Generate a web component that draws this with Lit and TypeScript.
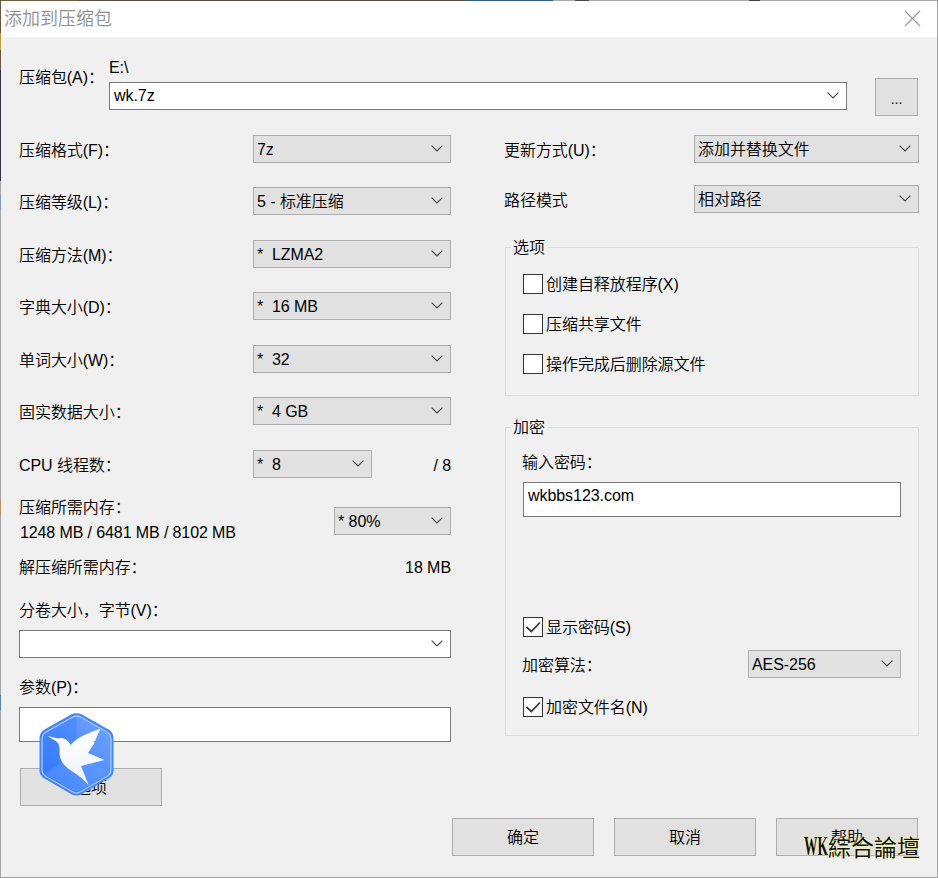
import { LitElement, html, css, svg } from "lit";
import { customElement, property } from "lit/decorators.js";

@customElement("ui-combo")
class UiCombo extends LitElement {
  @property() value = "";
  @property({ type: Boolean, reflect: true }) editable = false;
  static styles = css`
    :host { display: flex; box-sizing: border-box; height: 28px; border: 1px solid #adadad; background: #e1e1e1; align-items: center; justify-content: space-between; padding: 0 7px 0 3px; flex: none; }
    :host([editable]) { background: #fff; border-color: #7a7a7a; padding-left: 4px; }
    .value { white-space: pre; line-height: 20px; padding-top: 2px; }
    :host([editable]) .value { padding-top: 0; }
    .arrow { width: 12px; height: 7px; fill: none; stroke: #444; stroke-width: 1.15; margin-bottom: 1px; }
  `;
  render() {
    return html`<span class="value">${this.value}</span>
      <svg class="arrow" viewBox="0 0 12 7"><path d="M.6.7 6 6 11.4.7" /></svg>`;
  }
}

@customElement("ui-check")
class UiCheck extends LitElement {
  @property() label = "";
  @property({ type: Boolean }) checked = false;
  static styles = css`
    :host { display: flex; height: 20px; align-items: center; gap: 3px; }
    .box { box-sizing: border-box; width: 20px; height: 20px; border: 1px solid #333; background: #fff; flex: none; }
    .mark { display: block; width: 18px; height: 18px; fill: none; stroke: #333; stroke-width: 1.7; }
    .label { line-height: 20px; white-space: nowrap; padding-top: 2px; }
  `;
  render() {
    return html`<span class="box">${this.checked ? html`<svg class="mark" viewBox="0 0 18 18"><path d="M2.5 8.8 7.3 13.5 16 4.5" /></svg>` : ""}</span>
      <span class="label">${this.label}</span>`;
  }
}

const settings = [
  ["压缩格式(F)：", "7z"],
  ["压缩等级(L)：", "5 - 标准压缩"],
  ["压缩方法(M)：", "*  LZMA2"],
  ["字典大小(D)：", "*  16 MB"],
  ["单词大小(W)：", "*  32"],
  ["固实数据大小：", "*  4 GB"],
];

const bird = svg`
  <defs>
    <linearGradient id="g" x1="0" y1="1" x2="1" y2="0">
      <stop offset="0" stop-color="#3078ff" /><stop offset="1" stop-color="#72a4ff" />
    </linearGradient>
    <linearGradient id="b" x1="0" y1="0" x2="0" y2="1">
      <stop offset="0" stop-color="#fff" /><stop offset="1" stop-color="#edf3ff" />
    </linearGradient>
  </defs>
  <path d="M32 1.500Q37.500 -1.200 43 1.500L69.500 16.500Q74.500 19.500 74.500 25V57.500Q74.500 62.500 69.500 65.500L43 81Q37.500 84 32 81L5.500 65.500Q.5 62.500 .5 57.500V25Q.5 19.500 5.500 16.500Z" fill="#4587f5" />
  <path d="M33.500 4Q37.500 2 41.500 4L68 19Q72 21.500 72 26V57Q72 61 68 63.500L41.500 78.700Q37.500 81 33.500 78.700L7 63.500Q3 61 3 57V26Q3 21.500 7 19Z" fill="url(#g)" stroke="#a4c5ff" stroke-width="1.300" />
  <path d="M37.500 4V41L5 59V26Q5 22 8 20.500L34 5.500Z" fill="#2467e8" opacity=".2" />
  <path d="M37.500 41 70 59 42 77Q37.500 79 33 77L6 61Z" fill="#6fa4ff" opacity=".28" />
  <path d="M8.500 23 19 25.500Q27 23.500 31.500 32C39 23.500 50 20 61.500 15.500L56 28 54.500 28 55.500 30 49 40 65.500 47 42 53 50 73C41 59 21 57 20.500 40Q21.500 29.500 15 27Z" fill="url(#b)" />`;

@customElement("app-root")
class AppRoot extends LitElement {
  static styles = css`
    :host { display: block; width: 938px; height: 878px; overflow: hidden; color: #000; font: 350 16px/20px "Liberation Sans", "Noto Sans CJK SC", sans-serif; letter-spacing: -.06px; }
    .window { position: relative; box-sizing: border-box; height: 878px; border: 1px solid #a3a3a3; background: #f0f0f0; display: flex; flex-direction: column; }
    .edge-top { position: absolute; left: -1px; top: -1px; width: 938px; height: 1px; background: linear-gradient(90deg, #715a40 78px, #5b4a41 78px 468px, #2f5f8a 468px 553px, #aaa 553px 575px, #4a4548 575px 589px, #aaa 589px 749px, #444048 749px 760px, #a9a9a9 760px); }
    .edge-left { position: absolute; left: -1px; top: -1px; width: 1px; height: 878px; background: linear-gradient(#6b5540 33px, #b99a3c 33px 50px, #6b5540 50px 70px, #35354a 70px 181px, #a6a6a6 181px 195px, #7f9dba 195px 209px, #a3a3a3 209px 500px, #c0905f 500px 515px, #a3a3a3 515px 695px, #4d86bd 695px 710px, #a3a3a3 710px); }
    .title { height: 36px; flex: none; box-sizing: border-box; background: #fff; color: #909090; font-size: 18px; letter-spacing: 0; display: flex; align-items: center; justify-content: space-between; padding: 0 16px 0 3px; }
    .close { width: 17px; height: 17px; stroke: #999; stroke-width: 1.1; fill: none; margin-bottom: 1px; }
    .archive { display: flex; height: 98px; box-sizing: border-box; padding: 21px 18px 0; }
    .archive-label { width: 90px; padding-top: 10px; }
    .archive-path { width: 738px; display: flex; flex-direction: column; gap: 4px; }
    .browse { width: 43px; margin: 20px 0 0 28px; }
    .button { box-sizing: border-box; height: 38px; border: 1px solid #adadad; background: #e1e1e1; display: flex; align-items: center; justify-content: center; flex: none; }
    .dots { padding-top: 4px; font-size: 14px; }
    .columns { display: grid; grid-template-columns: 432px 414px; column-gap: 54px; padding: 0 18px; height: 683px; }
    .left, .right { display: flex; flex-direction: column; }
    .row { display: flex; justify-content: space-between; height: 28px; margin-bottom: 24px; flex: none; }
    .row:nth-child(even) { margin-bottom: 25px; }
    .row > .label { padding-top: 6px; }
    .w198 { width: 198px; }
    .threads { display: grid; grid-template-columns: 234px 119px 79px; height: 28px; }
    .threads > .label { padding-top: 6px; }
    .end { text-align: right; }
    .memory { display: flex; justify-content: space-between; margin-top: 20px; }
    .usage { padding: 5px 0 0 1px; letter-spacing: -.11px; }
    .w117 { width: 117px; margin-top: 9px; }
    .unpack { display: flex; justify-content: space-between; margin-top: 15px; }
    .volume { margin: 23px 0 9px; }
    .param { margin: 20px 0 9px; }
    .input { box-sizing: border-box; height: 35px; border: 1px solid #7a7a7a; background: #fff; padding: 3px 4px; }
    .options { width: 142px; margin: 26px 0 0 1px; padding-top: 2px; }
    .mode { display: flex; justify-content: space-between; height: 28px; margin-bottom: 22px; }
    .mode > .label { padding-top: 6px; margin-left: -1px; }
    .w225 { width: 225px; }
    .group { box-sizing: border-box; border: 1px solid #dcdcdc; margin: 0; padding: 0 17px; min-width: 0; width: 414px; display: flex; flex-direction: column; }
    .caption { align-self: flex-start; margin: -10px 0 0 -12px; padding: 0 3px 0 2px; background: #f0f0f0; line-height: 20px; }
    .g1 { height: 149px; margin-top: 12px; }
    .checks { display: flex; flex-direction: column; gap: 20px; padding-top: 16px; }
    .g2 { height: 309px; margin-top: 31px; }
    .password { padding: 15px 0 9px; margin-left: -1px; }
    .show { margin-top: 100px; }
    .algo { display: flex; justify-content: space-between; margin: 13px 0 19px; height: 28px; }
    .algo > .label { padding-top: 6px; margin-left: -1px; }
    .w153 { width: 153px; }
    .footer { display: flex; justify-content: flex-end; gap: 20px; padding-right: 19px; }
    .footer .button { width: 142px; padding-top: 2px; }
    .logo { position: absolute; left: 38px; top: 712px; width: 75px; height: 83px; }
    .mark { position: absolute; left: 803px; top: 830px; display: flex; align-items: center; font: 400 23px/30px "Noto Sans CJK TC", sans-serif; letter-spacing: 0; color: #111; text-shadow: 0 0 2px #ffffa8, 0 0 2px #ffffa8; white-space: nowrap; }
    .latin { width: 24px; font: bold 28px/30px "Liberation Serif", serif; transform: scaleX(.48); transform-origin: left; }
  `;
  render() {
    return html`<main class="window">
      <header class="title"><span>添加到压缩包</span><svg class="close" viewBox="0 0 17 17"><path d="M1 1 16 16M16 1 1 16" /></svg></header>
      <section class="archive">
        <span class="archive-label">压缩包(A)：</span>
        <div class="archive-path"><span>E:\\</span><ui-combo editable value="wk.7z"></ui-combo></div>
        <div class="button browse"><span class="dots">...</span></div>
      </section>
      <section class="columns">
        <div class="left">
          ${settings.map(([label, value]) => html`<div class="row"><span class="label">${label}</span><ui-combo class="w198" .value=${value}></ui-combo></div>`)}
          <div class="threads"><span class="label">CPU 线程数：</span><ui-combo value="*  8"></ui-combo><span class="label end">/ 8</span></div>
          <div class="memory"><div><div>压缩所需内存：</div><div class="usage">1248 MB / 6481 MB / 8102 MB</div></div><ui-combo class="w117" value="* 80%"></ui-combo></div>
          <div class="unpack"><span>解压缩所需内存：</span><span>18 MB</span></div>
          <div class="volume">分卷大小，字节(V)：</div>
          <ui-combo editable></ui-combo>
          <div class="param">参数(P)：</div>
          <div class="input"></div>
          <div class="button options">选项</div>
        </div>
        <div class="right">
          <div class="mode"><span class="label">更新方式(U)：</span><ui-combo class="w225" value="添加并替换文件"></ui-combo></div>
          <div class="mode"><span class="label">路径模式</span><ui-combo class="w225" value="相对路径"></ui-combo></div>
          <section class="group g1"><span class="caption">选项</span>
            <div class="checks"><ui-check label="创建自释放程序(X)"></ui-check><ui-check label="压缩共享文件"></ui-check><ui-check label="操作完成后删除源文件"></ui-check></div>
          </section>
          <section class="group g2"><span class="caption">加密</span>
            <div class="password">输入密码：</div>
            <div class="input">wkbbs123.com</div>
            <ui-check class="show" checked label="显示密码(S)"></ui-check>
            <div class="algo"><span class="label">加密算法：</span><ui-combo class="w153" value="AES-256"></ui-combo></div>
            <ui-check checked label="加密文件名(N)"></ui-check>
          </section>
        </div>
      </section>
      <footer class="footer"><div class="button">确定</div><div class="button">取消</div><div class="button">帮助</div></footer>
      <div class="edge-top"></div>
      <div class="edge-left"></div>
      <svg class="logo" viewBox="0 0 75 83">${bird}</svg>
      <div class="mark"><span class="latin">WK</span><span>綜合論壇</span></div>
    </main>`;
  }
}
